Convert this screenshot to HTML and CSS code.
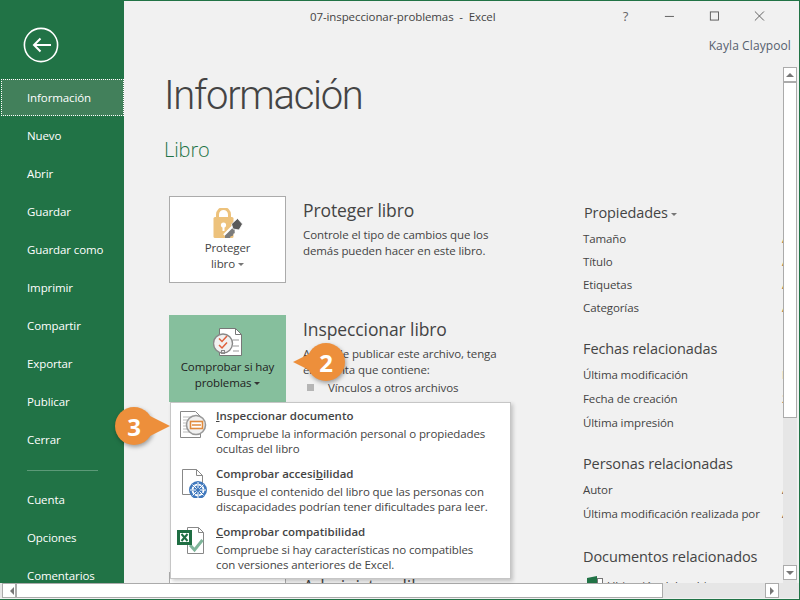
FILE: index.html
```html
<!DOCTYPE html>
<html lang="es">
<head>
    <meta charset="UTF-8">
    <title>07-inspeccionar-problemas - Excel</title>
    <link rel="stylesheet" href="styles.css">
</head>
<body>
    <div class="window">
        <div class="body">
            <nav class="sidebar">
                <div class="back">
                    <svg width="36" height="36" viewBox="0 0 36 36" fill="none" stroke="#fff">
                        <circle cx="18" cy="18" r="16.6" stroke-width="1.6"/>
                        <path d="M28 18H11M17.500 11.500L11 18l6.500 6.500" stroke-width="2"/>
                    </svg>
                </div>
                <a class="nav-item active">Información</a>
                <a class="nav-item">Nuevo</a>
                <a class="nav-item">Abrir</a>
                <a class="nav-item">Guardar</a>
                <a class="nav-item">Guardar como</a>
                <a class="nav-item">Imprimir</a>
                <a class="nav-item">Compartir</a>
                <a class="nav-item">Exportar</a>
                <a class="nav-item">Publicar</a>
                <a class="nav-item">Cerrar</a>
                <div class="nav-divider"></div>
                <a class="nav-item">Cuenta</a>
                <a class="nav-item">Opciones</a>
                <a class="nav-item">Comentarios</a>
            </nav>
            <div class="main">
                <header class="titlebar">
                    <span class="doc-title">07-inspeccionar-problemas  -  Excel</span>
                    <span class="help">?</span>
                    <svg class="ctl" width="12" height="12" viewBox="0 0 12 12" stroke="#555" fill="none"><path d="M1 6.500h10"/></svg>
                    <svg class="ctl" width="12" height="12" viewBox="0 0 12 12" stroke="#555" fill="none"><rect x="1.500" y="1.500" width="9" height="9"/></svg>
                    <svg class="ctl" width="12" height="12" viewBox="0 0 12 12" stroke="#555" fill="none"><path d="M1 1l10 10M11 1L1 11"/></svg>
                </header>
                <div class="user">Kayla Claypool</div>
                <div class="pane">
                    <div class="content">
                        <h1>Información</h1>
                        <h2>Libro</h2>
                        <div class="columns">
                            <div class="left">
                                <section class="block">
                                    <div class="big-btn">
                                        <svg width="30" height="30" viewBox="0 0 30 30" fill="none">
                                            <path d="M4.500 10V6.500a6 6 0 0 1 12 0V10" stroke="#edc27c" stroke-width="3"/>
                                            <rect x="0.500" y="9" width="20" height="21" rx="1.500" fill="#edc27c"/>
                                            <circle cx="10.500" cy="17" r="2.600" fill="#fff"/>
                                            <rect x="9.500" y="17" width="2" height="6" fill="#fff"/>
                                            <path d="M22 19L12.500 28.500" stroke="#fff" stroke-width="6.500"/>
                                            <path d="M22 19L13 28v1.500h3l1-2 2-.5.500-2 2-1" fill="#7c7c7c" stroke="#7c7c7c" stroke-width="2"/>
                                            <path d="M24.500 10.500l5 5.500-3.500 6-6-1-1.500-5z" fill="#5a5a5a" stroke="#fff" stroke-width="0.800"/>
                                        </svg>
                                        <span>Proteger<br>libro <i class="caret"></i></span>
                                    </div>
                                    <div class="block-text">
                                        <h3>Proteger libro</h3>
                                        <p>Controle el tipo de cambios que los<br>demás pueden hacer en este libro.</p>
                                    </div>
                                </section>
                                <section class="block tall">
                                    <div class="big-btn pressed">
                                        <svg width="30" height="30" viewBox="0 0 30 30" fill="none">
                                            <path d="M6.500 1.500h16l6 6v21h-22z" fill="#fff" stroke="#777"/>
                                            <path d="M22.500 1.500v6h6" stroke="#777"/>
                                            <path d="M20 13h6M20 19h6M20 24h6" stroke="#999"/>
                                            <circle cx="10" cy="16.500" r="9.500" fill="#f1f1f1" stroke="#888" stroke-width="1.400"/>
                                            <path d="M6 11.500l3 3 5-5.500M6 18l3 3 5-5.500" stroke="#e0603c" stroke-width="1.500"/>
                                            <rect x="8.500" y="23.500" width="3" height="3" stroke="#888"/>
                                        </svg>
                                        <span class="dark-label">Comprobar si hay<br>problemas <i class="caret dark"></i></span>
                                    </div>
                                    <div class="block-text">
                                        <h3>Inspeccionar libro</h3>
                                        <p>Antes de publicar este archivo, tenga<br>en cuenta que contiene:</p>
                                        <ul>
                                            <li>Vínculos a otros archivos</li>
                                        </ul>
                                    </div>
                                </section>
                                <section class="block">
                                    <div class="big-btn">
                                        <svg width="30" height="30" viewBox="0 0 30 30" fill="none"><rect x="7.500" y="7.500" width="15" height="20" fill="#fff" stroke="#777"/></svg>
                                    </div>
                                    <div class="block-text">
                                        <h3>Administrar libro</h3>
                                    </div>
                                </section>
                            </div>
                            <aside class="props">
                                <div class="prop-group g1">
                                    <h4 class="first">Propiedades <i class="caret"></i></h4>
                                    <div class="row"><span>Tamaño</span><b>Agregar</b></div>
                                    <div class="row"><span>Título</span><b>Agregar</b></div>
                                    <div class="row"><span>Etiquetas</span><b>Agregar</b></div>
                                    <div class="row"><span>Categorías</span><b>Agregar</b></div>
                                </div>
                                <div class="prop-group g2">
                                    <h4>Fechas relacionadas</h4>
                                    <div class="row wide"><span>Última modificación</span><b class="val">Hoy</b></div>
                                    <div class="row wide"><span>Fecha de creación</span><b class="val">2/2/2016</b></div>
                                    <div class="row wide"><span>Última impresión</span></div>
                                </div>
                                <div class="prop-group g3">
                                    <h4>Personas relacionadas</h4>
                                    <div class="row wide"><span>Autor</span><b class="val">Agregar</b></div>
                                    <div class="row wide"><span>Última modificación realizada por</span><b class="val">Agregar</b></div>
                                </div>
                                <div class="prop-group">
                                    <h4>Documentos relacionados</h4>
                                    <div class="row related">
                                        <svg width="16" height="16" viewBox="0 0 16 16"><path d="M0 2l10-2v16H0z" fill="#217346"/><rect x="10.500" y="2.500" width="5" height="13" fill="#fff" stroke="#777"/></svg>
                                        <span>Ubicación del archivo</span>
                                    </div>
                                </div>
                            </aside>
                        </div>
                    </div>
                    <div class="vscroll">
                        <div class="sb-btn"><i class="tri up"></i></div>
                        <div class="v-thumb"></div>
                        <div class="v-track"></div>
                        <div class="sb-btn"><i class="tri down"></i></div>
                    </div>
                </div>
            </div>
        </div>
        <div class="hscroll">
            <div class="sb-btn"><i class="tri left"></i></div>
            <div class="h-thumb"></div>
            <div class="h-track"></div>
            <div class="sb-btn"><i class="tri right"></i></div>
        </div>

        <div class="menu">
            <div class="menu-item">
                <svg width="32" height="32" viewBox="0 0 32 32" fill="none">
                    <path d="M3.500 3.500h15l5 5v21h-20z" fill="#fff" stroke="#888"/>
                    <path d="M6 9h9M6 12h7M6 15h6M6 18h6M6 21h7M6 24h11" stroke="#bbb"/>
                    <circle cx="19" cy="17" r="9.500" fill="#f1f1f1" stroke="#999" stroke-width="1.600"/>
                    <rect x="13.500" y="13.500" width="12" height="7" fill="#fff" stroke="#e08a3c" stroke-width="1.600"/>
                    <path d="M15 17h9" stroke="#e08a3c" stroke-width="1.500"/>
                </svg>
                <div class="menu-text">
                    <strong><u>I</u>nspeccionar documento</strong>
                    <p>Compruebe la información personal o propiedades<br>ocultas del libro</p>
                </div>
            </div>
            <div class="menu-item">
                <svg width="32" height="32" viewBox="0 0 32 32" fill="none">
                    <path d="M5.500 3.500h14l6 6v19h-20z" fill="#fff" stroke="#888"/>
                    <path d="M19.500 3.500v6h6" stroke="#888"/>
                    <circle cx="21" cy="24" r="9" fill="#3f78bd"/>
                    <circle cx="21" cy="24" r="5.500" stroke="#fff" stroke-width="1.800" stroke-dasharray="3 1.300"/>
                    <path d="M21 16v16M13 24h16M15.500 18.500l11 11M26.500 18.500l-11 11" stroke="#fff"/>
                    <circle cx="21" cy="24" r="2" fill="#3f78bd"/>
                </svg>
                <div class="menu-text">
                    <strong>Comprobar accesi<u>b</u>ilidad</strong>
                    <p>Busque el contenido del libro que las personas con<br>discapacidades podrían tener dificultades para leer.</p>
                </div>
            </div>
            <div class="menu-item">
                <svg width="32" height="32" viewBox="0 0 32 32" fill="none">
                    <path d="M10.500 3.500h11l5 5v21h-16z" fill="#fff" stroke="#888"/>
                    <path d="M21.500 3.500v5h5" stroke="#888"/>
                    <path d="M13 21l4.500 5 8-10" stroke="#7fb59a" stroke-width="3"/>
                    <rect x="0" y="6" width="15" height="15" fill="#1f6e43"/>
                    <rect x="3" y="9" width="9" height="9" fill="#fff"/>
                    <path d="M4.500 10l6 7M10.500 10l-6 7" stroke="#1f6e43" stroke-width="2"/>
                </svg>
                <div class="menu-text">
                    <strong><u>C</u>omprobar compatibilidad</strong>
                    <p>Compruebe si hay características no compatibles<br>con versiones anteriores de Excel.</p>
                </div>
            </div>
        </div>

        <div class="callout two">2</div>
        <div class="callout three">3</div>
    </div>
</body>
</html>
```

FILE: styles.css
```css
* {
    box-sizing: border-box;
}
body {
    margin: 0;
    font-family: "Open Sans", "Noto Sans", sans-serif;
    font-size: 11.5px;
    letter-spacing: -0.1px;
    color: #444;
}
.window {
    position: relative;
    width: 800px;
    height: 600px;
    overflow: hidden;
    background-color: #f1f1f1;
    border-top: 1px solid #217346;
    border-right: 1px solid #217346;
    border-bottom: 1px solid #217346;
    display: flex;
    flex-direction: column;
}
.body {
    display: flex;
    height: 582px;
}
.sidebar {
    width: 124px;
    flex-shrink: 0;
    background-color: #217346;
    color: #fff;
    overflow: hidden;
}
.back {
    height: 78px;
    padding: 26px 0 0 23px;
}
.nav-item {
    display: block;
    height: 38px;
    line-height: 38px;
    padding-left: 27px;
}
.nav-item.active {
    height: 37px;
    margin: 0 0 1px 1px;
    padding-left: 26px;
    background-color: #42805b;
    outline: 1px dotted #fff;
    outline-offset: -1px;
}
.nav-divider {
    width: 71px;
    height: 1px;
    margin: 11px 0 10px 27px;
    background-color: #5c9a78;
}
.main {
    flex: 1;
    min-width: 0;
    display: flex;
    flex-direction: column;
}
.titlebar {
    height: 30px;
    display: flex;
    align-items: center;
    padding-left: 186px;
    white-space: pre;
}
.doc-title {
    width: 338px;
}
.help {
    width: 46px;
    margin-left: 7px;
    font-size: 13px;
    color: #666;
}
.ctl {
    margin-right: 34px;
}
.user {
    height: 36px;
    padding: 6px 8px 0 0;
    text-align: right;
    font-size: 12px;
    letter-spacing: 0.1px;
    color: #55606e;
}
.pane {
    flex: 1;
    min-height: 0;
    display: flex;
}
.content {
    flex: 1;
    min-width: 0;
    overflow: hidden;
    padding-left: 40px;
}
h1 {
    margin: 0;
    font-family: Roboto, "Open Sans", sans-serif;
    font-size: 40px;
    font-weight: 300;
    letter-spacing: -1.3px;
    line-height: 58px;
    height: 56px;
    color: #444;
}
h2 {
    margin: 0;
    padding-top: 13px;
    font-size: 20px;
    font-weight: 300;
    line-height: 27px;
    color: #217346;
}
.columns {
    display: flex;
    padding-top: 33px;
}
.left {
    width: 419px;
    flex-shrink: 0;
    padding-left: 5px;
}
.block {
    display: flex;
    height: 119px;
    gap: 17px;
}
.block.tall {
    height: 257px;
}
.big-btn {
    width: 117px;
    height: 87px;
    flex-shrink: 0;
    background-color: #fff;
    border: 1px solid #ababab;
    display: flex;
    flex-direction: column;
    align-items: center;
    padding-top: 11px;
    text-align: center;
    line-height: 16px;
}
.big-btn span {
    margin-top: 2px;
}
.big-btn.pressed {
    background-color: #86bf9d;
    border-color: #86bf9d;
}
.dark-label {
    color: #222;
}
.caret {
    display: inline-block;
    vertical-align: middle;
    border-left: 3px solid transparent;
    border-right: 3px solid transparent;
    border-top: 3px solid #777;
}
.caret.dark {
    border-top-color: #333;
}
.block-text h3 {
    margin: 0;
    font-size: 17.5px;
    font-weight: 400;
    line-height: 28px;
    color: #444;
}
.block-text p {
    margin: 0;
    padding-top: 3px;
    line-height: 16px;
}
.block-text ul {
    list-style: none;
    margin: 0;
    padding: 2px 0 0 25px;
}
.block-text li {
    position: relative;
    line-height: 16px;
}
.block-text li::before {
    content: "";
    position: absolute;
    left: -21px;
    top: 4px;
    width: 7px;
    height: 7px;
    background-color: #b5b5b5;
}
.props {
    flex-shrink: 0;
    width: 300px;
    margin-top: 4px;
}
.prop-group.g1 {
    height: 136px;
}
.prop-group.g2 {
    height: 115px;
}
.prop-group.g3 {
    height: 93px;
}
.props h4 {
    margin: 0 0 1px;
    font-size: 14.5px;
    font-weight: 400;
    line-height: 26px;
    color: #444;
}
.props h4.first {
    padding-left: 1px;
}
.row {
    display: flex;
    height: 23px;
    line-height: 23px;
}
.row.wide {
    height: 24px;
    line-height: 24px;
}
.row span {
    width: 199px;
    flex-shrink: 0;
    white-space: nowrap;
}
.row b {
    font-weight: 400;
    white-space: nowrap;
    color: #a0702a;
}
.row b.val {
    color: #444;
}
.row.related {
    gap: 4px;
    padding: 5px 0 0 4px;
    align-items: flex-start;
}
.row.related span {
    margin-top: 2px;
    line-height: 16px;
}
.vscroll {
    width: 14px;
    flex-shrink: 0;
    margin-right: 2px;
    background-color: #e6e6e6;
    display: flex;
    flex-direction: column;
    padding-bottom: 3px;
}
.v-thumb {
    height: 336px;
    background-color: #fff;
    border: 1px solid #ababab;
}
.v-track {
    flex: 1;
}
.sb-btn {
    width: 14px;
    height: 15px;
    flex-shrink: 0;
    background-color: #fff;
    border: 1px solid #ababab;
    display: flex;
    align-items: center;
    justify-content: center;
}
.tri {
    display: block;
    width: 0;
    height: 0;
    border: 4px solid transparent;
}
.tri.up {
    border-top-width: 0;
    border-bottom-color: #777;
}
.tri.down {
    border-bottom-width: 0;
    border-top-color: #777;
}
.tri.left {
    border-left-width: 0;
    border-right-color: #777;
}
.tri.right {
    border-right-width: 0;
    border-left-color: #777;
}
.hscroll {
    height: 15px;
    display: flex;
    padding: 0 20px 0 2px;
    background-color: #e6e6e6;
}
.h-thumb {
    width: 647px;
    background-color: #fff;
    border: 1px solid #ababab;
}
.h-track {
    flex: 1;
}

/* menu + numbered callouts sit over the page */
.menu {
    position: absolute;
    left: 170px;
    top: 401px;
    width: 341px;
    height: 177px;
    background-color: #fff;
    border: 1px solid #c6c6c6;
    box-shadow: 2px 2px 4px rgba(0,0,0,0.2);
}
.menu-item {
    display: flex;
    height: 58px;
    padding: 5px 0 0 6px;
    gap: 7px;
}
.menu-text strong {
    display: block;
    font-weight: 600;
    letter-spacing: 0;
    line-height: 16px;
    color: #444;
}
.menu-text p {
    margin: 2px 0 0;
    line-height: 15px;
}
.callout {
    position: absolute;
    width: 38px;
    height: 38px;
    border-radius: 50%;
    background-color: #ed8f3b;
    box-shadow: 1px 2px 4px rgba(0,0,0,0.35);
    color: #fff;
    font-size: 24px;
    font-weight: 700;
    display: flex;
    align-items: center;
    justify-content: center;
}
.callout::before {
    content: "";
    position: absolute;
    top: 9px;
    border-top: 10px solid transparent;
    border-bottom: 10px solid transparent;
}
.callout.two {
    left: 307px;
    top: 342px;
}
.callout.two::before {
    left: -14px;
    border-right: 20px solid #ed8f3b;
}
.callout.three {
    left: 115px;
    top: 406px;
}
.callout.three::before {
    right: -17px;
    border-left: 20px solid #ed8f3b;
}
```
